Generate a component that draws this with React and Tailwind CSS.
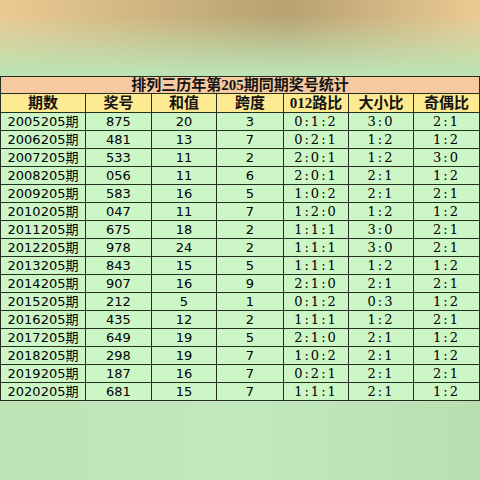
const ROWS = [
  ['2005205期', '875', '20', '3', '0:1:2', '3:0', '2:1'],
  ['2006205期', '481', '13', '7', '0:2:1', '1:2', '1:2'],
  ['2007205期', '533', '11', '2', '2:0:1', '1:2', '3:0'],
  ['2008205期', '056', '11', '6', '2:0:1', '2:1', '1:2'],
  ['2009205期', '583', '16', '5', '1:0:2', '2:1', '2:1'],
  ['2010205期', '047', '11', '7', '1:2:0', '1:2', '1:2'],
  ['2011205期', '675', '18', '2', '1:1:1', '3:0', '2:1'],
  ['2012205期', '978', '24', '2', '1:1:1', '3:0', '2:1'],
  ['2013205期', '843', '15', '5', '1:1:1', '1:2', '1:2'],
  ['2014205期', '907', '16', '9', '2:1:0', '2:1', '2:1'],
  ['2015205期', '212', '5', '1', '0:1:2', '0:3', '1:2'],
  ['2016205期', '435', '12', '2', '1:1:1', '1:2', '2:1'],
  ['2017205期', '649', '19', '5', '2:1:0', '2:1', '1:2'],
  ['2018205期', '298', '19', '7', '1:0:2', '2:1', '1:2'],
  ['2019205期', '187', '16', '7', '0:2:1', '2:1', '2:1'],
  ['2020205期', '681', '15', '7', '1:1:1', '2:1', '1:2'],
]

const HEAD = ['期数', '奖号', '和值', '跨度', '012路比', '大小比', '奇偶比']
const WIDTHS = [85, 66, 65, 67, 65, 65, 66]

export default function App() {
  return (
    <div className="w-[480px] h-[480px] flex flex-col bg-[#bfe4ba] overflow-hidden font-['DejaVu_Sans','Noto_Sans_CJK_SC',sans-serif] text-black">
      {/* blurred backdrop, top */}
      <div className="h-[76px] shrink-0 bg-[linear-gradient(to_bottom,rgba(189,226,180,0)_20%,#bde2b4_95%),linear-gradient(to_right,#ebca92,#c3ab78_45%,#b9a172_60%,#ebca92)]" />

      <table className="table-fixed border-collapse w-[480px] border border-[#23301f]">
        <colgroup>
          {WIDTHS.map((w, i) => (
            <col key={i} style={{ width: w }} />
          ))}
        </colgroup>
        <thead className="font-['Liberation_Serif','Noto_Sans_CJK_SC',serif] text-[#141414]">
          <tr className="h-[17px] bg-[#f7c9a0]">
            <th colSpan={7} className="border border-[#23301f] p-0 text-[15px] leading-[16px] font-bold text-center">
              排列三历年第205期同期奖号统计
            </th>
          </tr>
          <tr className="h-[19px] bg-[#fde98f]">
            {HEAD.map((h) => (
              <th key={h} className="border border-[#23301f] p-0 text-[15px] leading-[18px] font-bold text-center">
                {h}
              </th>
            ))}
          </tr>
        </thead>
        <tbody>
          {ROWS.map((r) => (
            <tr key={r[0]} className="h-[18px] bg-[#cdf6c6]">
              {r.map((c, i) => (
                <td
                  key={i}
                  className={
                    'border border-[#23301f] p-0 text-center text-[13px] leading-[17px] ' +
                    (i >= 4 ? "font-['DejaVu_Serif',serif] tracking-[2px]" : '')
                  }
                >
                  {c}
                </td>
              ))}
            </tr>
          ))}
        </tbody>
      </table>

      <div className="flex-1 bg-linear-to-r from-[#bde2b6] via-[#c2e8bd] to-[#b8deb2]" />
    </div>
  )
}
